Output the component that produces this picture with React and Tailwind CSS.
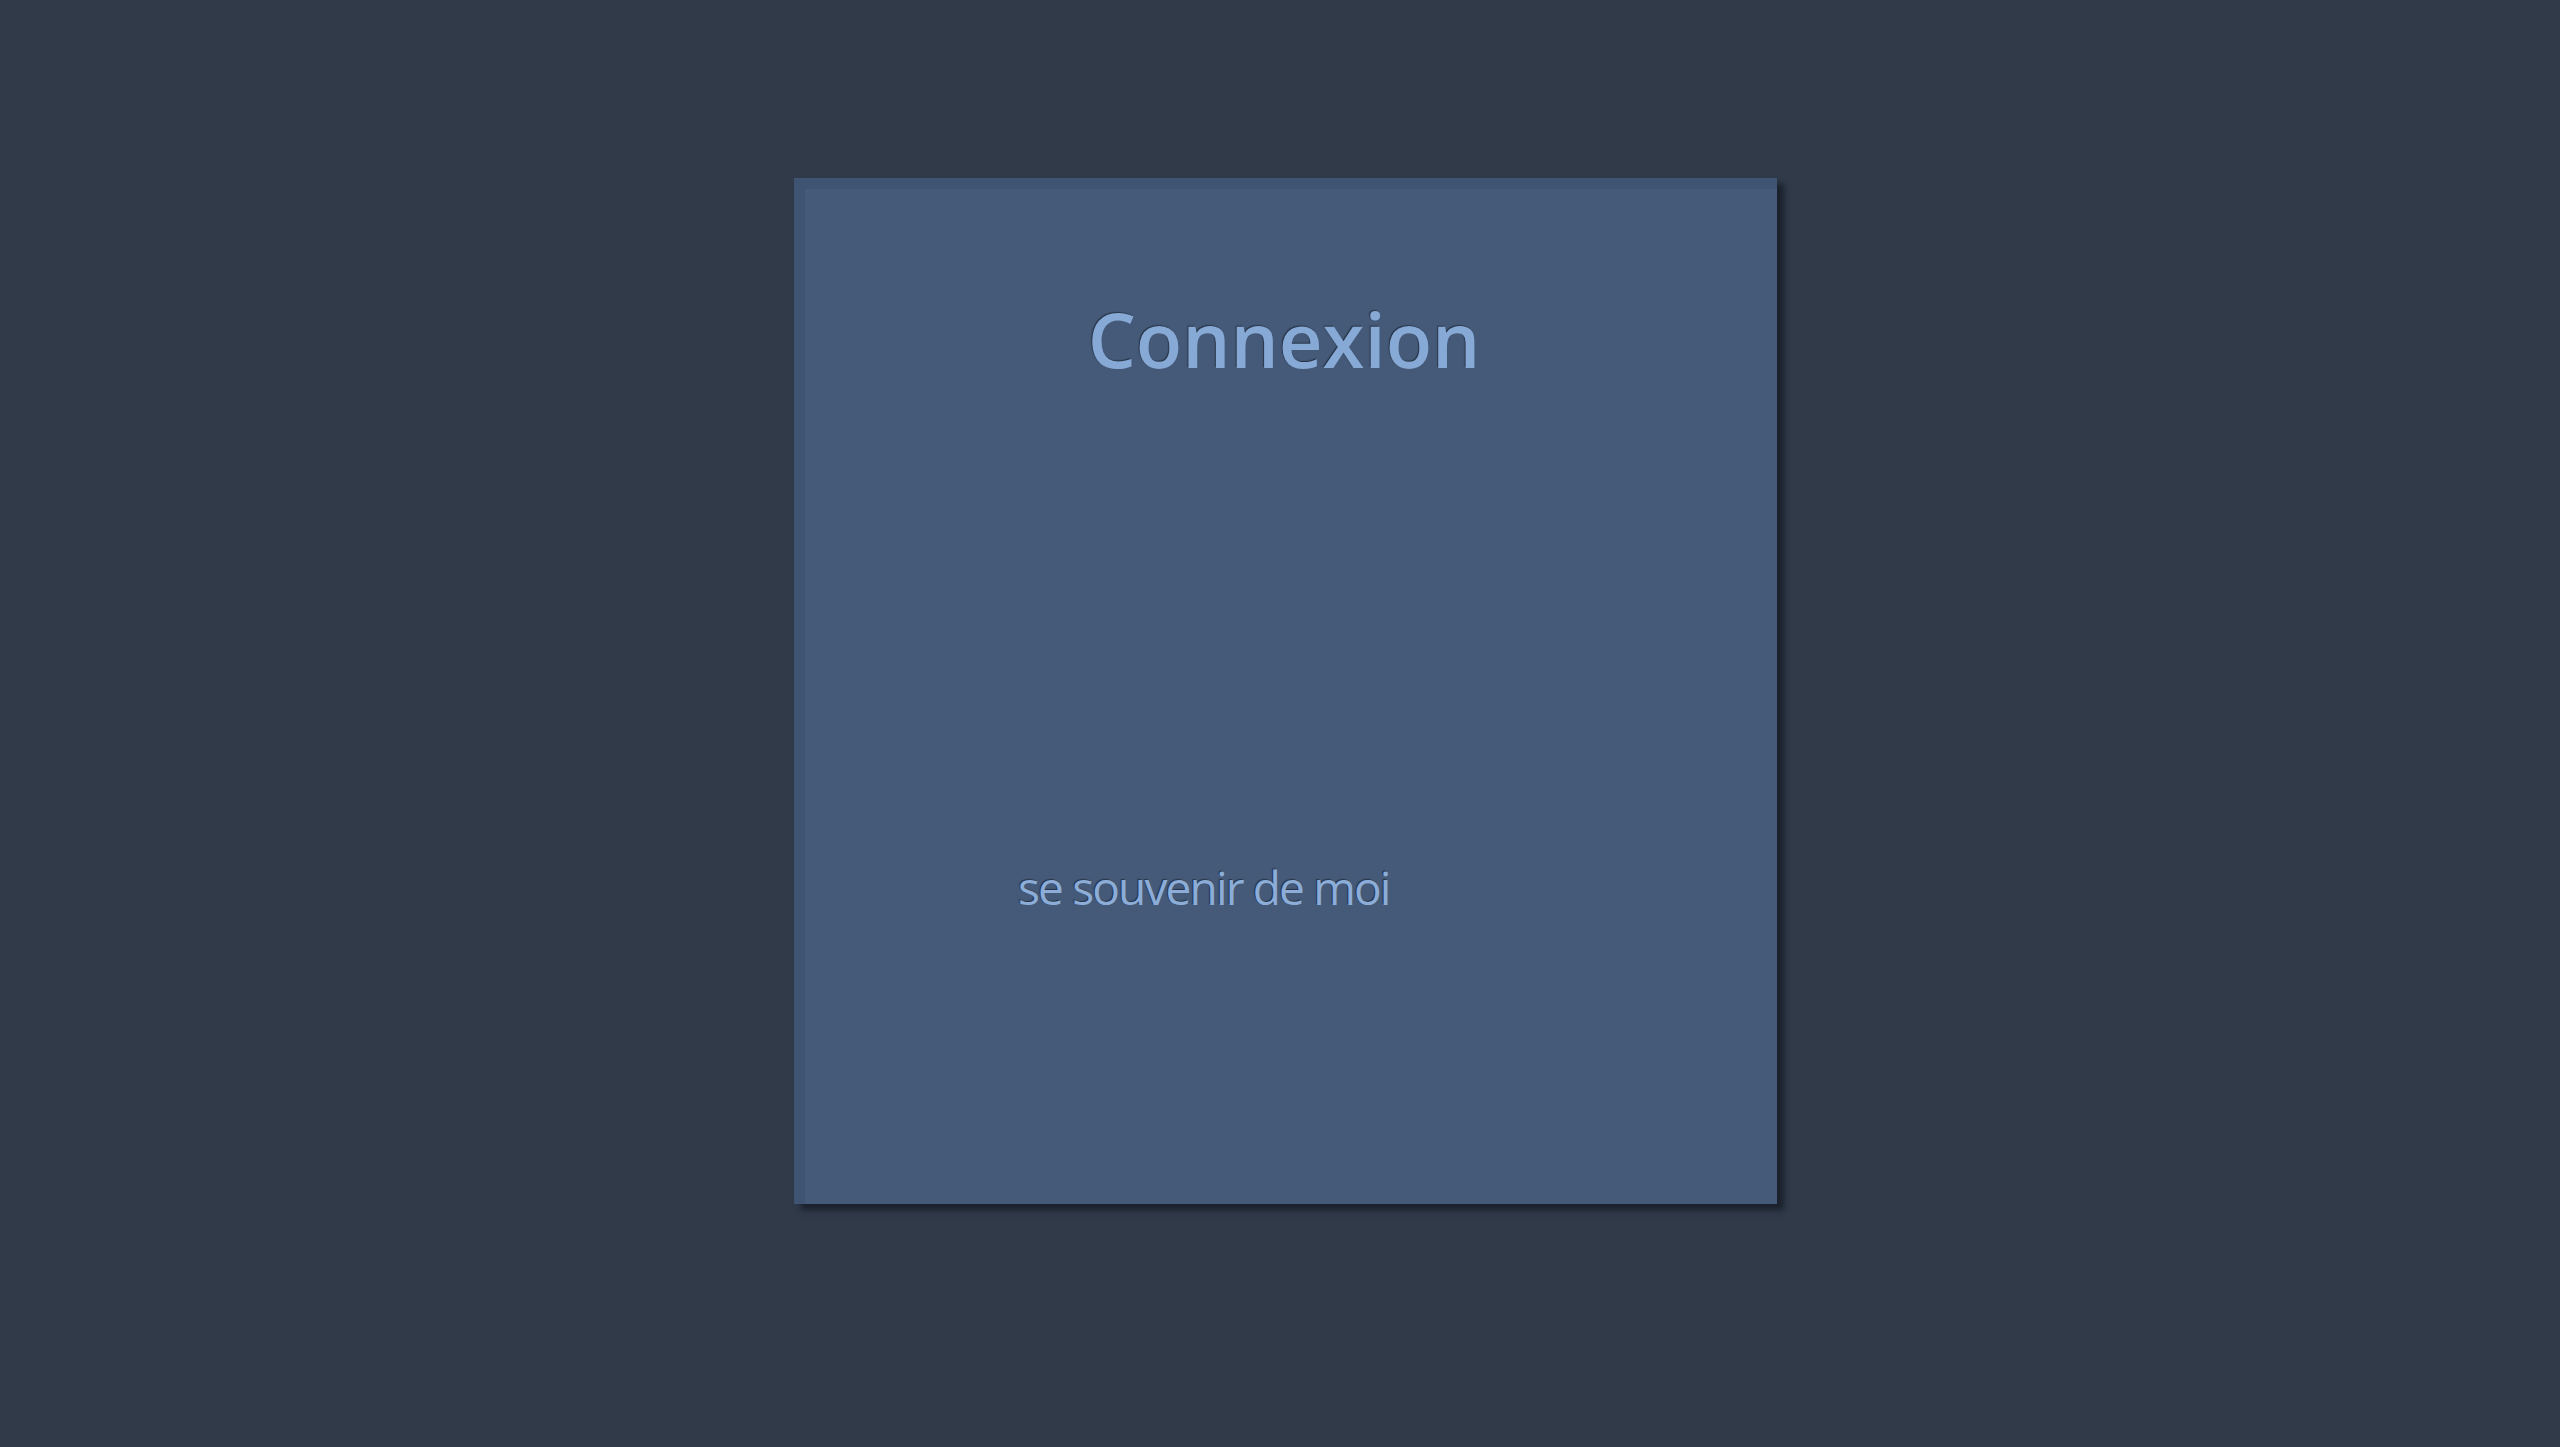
import React from 'react';

export default function App() {
  return (
    <div className="min-h-[1447px] w-full bg-[#303a49] pl-[794px] pt-[178px] font-['Open_Sans',sans-serif]">
      <div className="flex h-[1026px] w-[983px] flex-col border-l-[11px] border-t-[11px] border-[#3f5472] bg-[#455a78] shadow-[7px_6px_6px_rgba(12,16,24,0.6)]">
        <h1 className="mt-[112px] pr-[14px] text-center text-[76px] font-semibold leading-none text-[#87a9d6] [text-shadow:-1px_-1px_1px_rgba(20,28,40,0.6)]">
          Connexion
        </h1>
        <form className="flex flex-1 flex-col">
          <label className="ml-[213px] mt-[487px] flex items-center text-[46px] leading-none tracking-[-0.04em] text-[#8cadd8] [text-shadow:-1px_-1px_1px_rgba(20,28,40,0.6)]">
            se souvenir de moi
          </label>
        </form>
      </div>
    </div>
  );
}
